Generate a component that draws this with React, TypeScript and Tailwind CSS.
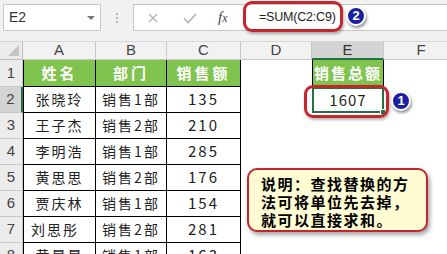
import React from "react";

const CJK = { fontFamily: '"Noto Sans CJK SC", "Noto Sans", sans-serif' };
const SANS = { fontFamily: '"Liberation Sans", Arial, sans-serif' };

const rows: [string, string, string][] = [
  ["张晓玲", "销售1部", "135"],
  ["王子杰", "销售2部", "210"],
  ["李明浩", "销售1部", "285"],
  ["黄思思", "销售2部", "176"],
  ["贾庆林", "销售1部", "154"],
  ["刘思彤", "销售2部", "281"],
  ["黄晨晨", "销售1部", "163"],
];

const tableCell =
  "flex items-center justify-center border-r border-b border-black text-[14px] text-[#222] tracking-[2px]";

function Badge({ n, className }: { n: string; className: string }) {
  return (
    <div
      className={`absolute w-[20px] h-[20px] rounded-full bg-[#1b1fa3] border-2 border-white shadow-[1px_2px_3px_rgba(0,0,0,0.45)] flex items-center justify-center text-white text-[13px] font-bold ${className}`}
      style={SANS}
    >
      {n}
    </div>
  );
}

export default function App() {
  return (
    <div className="relative w-[447px] h-[254px] overflow-hidden bg-white" style={CJK}>
      {/* toolbar */}
      <div className="flex items-start h-[42px] bg-[#f1f1f1] pt-[4px] border-b border-[#d6d6d6]">
        <div className="ml-[3px] w-[98px] h-[27px] bg-white border border-[#c6c6c6] flex items-center justify-between pl-[5px] pr-[5px]">
          <span className="text-[14px] text-[#333]" style={SANS}>
            E2
          </span>
          <span className="w-0 h-0 border-l-[4px] border-r-[4px] border-t-[4px] border-l-transparent border-r-transparent border-t-[#777]" />
        </div>
        <div className="w-[32px] h-[27px] flex flex-col items-center justify-center gap-[2px]">
          <span className="w-[2px] h-[2px] bg-[#b8b8b8]" />
          <span className="w-[2px] h-[2px] bg-[#b8b8b8]" />
          <span className="w-[2px] h-[2px] bg-[#b8b8b8]" />
        </div>
        <div className="flex-1 h-[27px] bg-white border border-[#c6c6c6] border-r-0 flex items-center">
          <svg width="14" height="14" viewBox="0 0 14 14" className="ml-[12px] shrink-0">
            <path d="M3 3 L11 11 M11 3 L3 11" stroke="#b5b5b5" strokeWidth="1.4" fill="none" />
          </svg>
          <svg width="16" height="14" viewBox="0 0 16 14" className="ml-[22px] shrink-0">
            <path d="M2 7.5 L6 11.5 L14 3" stroke="#b5b5b5" strokeWidth="1.6" fill="none" />
          </svg>
          <span
            className="ml-[20px] w-[14px] text-[15px] italic text-[#444]"
            style={{ fontFamily: '"Liberation Serif", "Times New Roman", serif' }}
          >
            f<span className="text-[12px]">x</span>
          </span>
          <span className="ml-[27px] text-[12.5px] tracking-[-0.2px] text-[#222] whitespace-nowrap" style={SANS}>
            =SUM(C2:C9)
          </span>
        </div>
      </div>

      {/* grid */}
      <div className="grid grid-cols-[23px_73px_71px_74px_71px_72px_74px] grid-rows-[18px_27px_26px_26px_26px_26px_26px_26px_26px]">
        {/* header row */}
        <div className="bg-[#ececec] border-r border-b border-[#bdbdbd] relative">
          <div
            className="absolute right-[3px] bottom-[3px] w-0 h-0"
            style={{ borderBottom: "11px solid #c4c4c4", borderLeft: "11px solid transparent" }}
          />
        </div>
        {["A", "B", "C", "D"].map((c) => (
          <div
            key={c}
            className="bg-[#f2f2f2] border-r border-b border-[#c8c8c8] flex items-center justify-center text-[15px] text-[#444]"
            style={SANS}
          >
            {c}
          </div>
        ))}
        <div
          className="bg-[#d4d4d4] border-r border-[#c8c8c8] border-b-2 border-b-[#217346] flex items-center justify-center text-[15px] text-[#333]"
          style={SANS}
        >
          E
        </div>
        <div
          className="bg-[#f2f2f2] border-b border-[#c8c8c8] flex items-center justify-center text-[15px] text-[#444]"
          style={SANS}
        >
          F
        </div>

        {/* row 1 */}
        <div
          className="bg-[#ececec] border-r border-b border-[#c8c8c8] flex items-center justify-center text-[15px] text-[#444]"
          style={SANS}
        >
          1
        </div>
        {["姓名", "部门", "销售额"].map((t, i) => (
          <div
            key={t}
            className={`bg-[#80c34e] border-r border-b border-black flex items-center justify-center text-white text-[15px] font-bold tracking-[3px] ${i === 0 ? "border-l" : ""}`}
          >
            {t}
          </div>
        ))}
        <div />
        <div className="bg-[#80c34e] border border-black border-t-0 flex items-center justify-center text-white text-[15px] font-bold tracking-[2px]">
          销售总额
        </div>
        <div />

        {rows.map((r, idx) => {
          const n = idx + 2;
          return (
            <React.Fragment key={n}>
              <div
                className={`border-b border-[#c8c8c8] flex items-center justify-center text-[15px] text-[#444] ${
                  n === 2 ? "bg-[#d4d4d4] border-r-2 border-r-[#217346]" : "bg-[#ececec] border-r"
                }`}
                style={SANS}
              >
                {n}
              </div>
              <div className={`${tableCell} border-l ${n === 7 ? "justify-start pl-[7px]" : ""}`}>{r[0]}</div>
              <div className={tableCell}>{r[1]}</div>
              <div className={`${tableCell} tracking-[1px] text-[15px]`}>{r[2]}</div>
              <div />
              {n === 2 ? (
                <div className="relative flex items-center justify-center border-2 border-[#217346] text-[15px] text-[#222] tracking-[1px]">
                  1607
                  <span className="absolute right-[-4px] bottom-[-4px] w-[6px] h-[6px] bg-[#217346] border border-white" />
                </div>
              ) : (
                <div />
              )}
              <div />
            </React.Fragment>
          );
        })}
      </div>

      {/* callouts */}
      <div className="absolute left-[243px] top-[1px] w-[100px] h-[31px] rounded-[9px] border-[3px] border-[#c4262e] shadow-[1px_2px_3px_rgba(0,0,0,0.3)]" />
      <Badge n="2" className="left-[346px] top-[6px]" />

      <div className="absolute left-[304px] top-[85px] w-[85px] h-[33px] rounded-[9px] border-[3px] border-[#c4262e] shadow-[1px_2px_3px_rgba(0,0,0,0.3)]" />
      <Badge n="1" className="left-[391px] top-[91px]" />

      <div className="absolute left-[247px] top-[168px] w-[181px] h-[64px] rounded-[10px] border-2 border-[#c4262e] bg-[#fffbd2] shadow-[2px_3px_4px_rgba(0,0,0,0.35)] pl-[12px] pt-[5px]">
        <div className="text-[15px] leading-[18px] font-bold text-black tracking-[1.5px]">
          <div>说明：查找替换的方</div>
          <div>法可将单位先去掉，</div>
          <div>就可以直接求和。</div>
        </div>
      </div>
    </div>
  );
}
